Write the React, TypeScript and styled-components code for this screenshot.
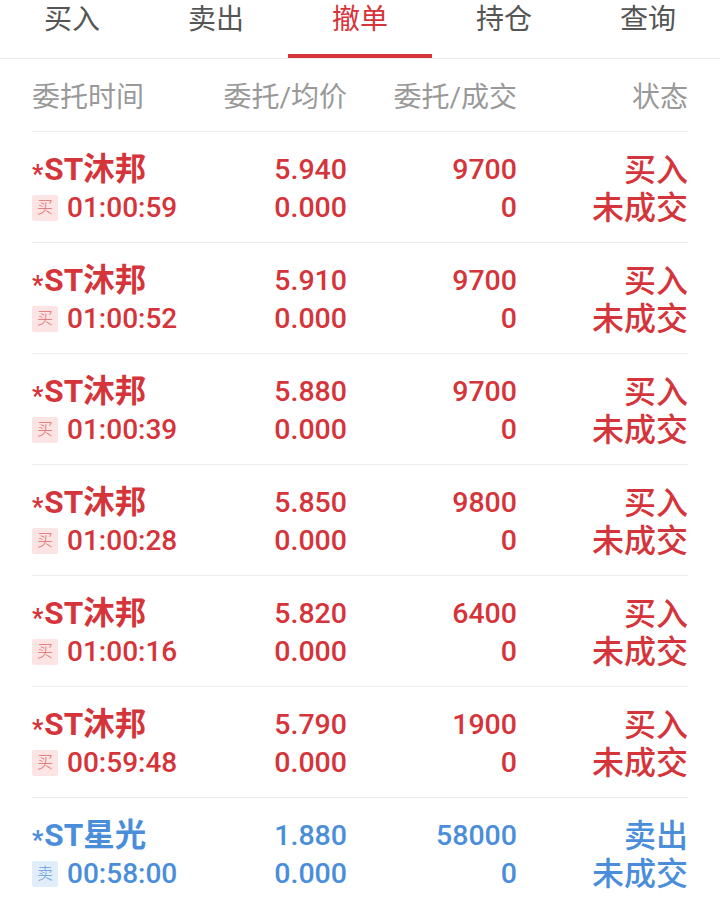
import styled, { createGlobalStyle } from 'styled-components';

const RED = '#d5343a';
const BLUE = '#4a8edb';

type Side = 'buy' | 'sell';

interface Order {
  name: string;
  time: string;
  price: string;
  avg: string;
  qty: string;
  done: string;
  side: Side;
}

const tabs = ['买入', '卖出', '撤单', '持仓', '查询'];

const orders: Order[] = [
  { name: 'ST沐邦', time: '01:00:59', price: '5.940', avg: '0.000', qty: '9700', done: '0', side: 'buy' },
  { name: 'ST沐邦', time: '01:00:52', price: '5.910', avg: '0.000', qty: '9700', done: '0', side: 'buy' },
  { name: 'ST沐邦', time: '01:00:39', price: '5.880', avg: '0.000', qty: '9700', done: '0', side: 'buy' },
  { name: 'ST沐邦', time: '01:00:28', price: '5.850', avg: '0.000', qty: '9800', done: '0', side: 'buy' },
  { name: 'ST沐邦', time: '01:00:16', price: '5.820', avg: '0.000', qty: '6400', done: '0', side: 'buy' },
  { name: 'ST沐邦', time: '00:59:48', price: '5.790', avg: '0.000', qty: '1900', done: '0', side: 'buy' },
  { name: 'ST星光', time: '00:58:00', price: '1.880', avg: '0.000', qty: '58000', done: '0', side: 'sell' },
];

function App() {
  return (
    <Page>
      <GlobalStyle />
      <TabBar>
        {tabs.map((t, i) => (
          <Tab key={t} $active={i === 2}>
            {t}
          </Tab>
        ))}
      </TabBar>
      <List>
        <HeaderRow>
          <HeadCell>委托时间</HeadCell>
          <HeadCell $right>委托/均价</HeadCell>
          <HeadCell $right>委托/成交</HeadCell>
          <HeadCell $right>状态</HeadCell>
        </HeaderRow>
        {orders.map((o, i) => (
          <OrderRow key={i} $side={o.side}>
            <Cell>
              <Name>
                <Star>*</Star>
                {o.name}
              </Name>
              <TimeLine>
                <SideTag $side={o.side}>{o.side === 'buy' ? '买' : '卖'}</SideTag>
                {o.time}
              </TimeLine>
            </Cell>
            <Cell $right>
              <Num>{o.price}</Num>
              <Num>{o.avg}</Num>
            </Cell>
            <Cell $right>
              <Num>{o.qty}</Num>
              <Num>{o.done}</Num>
            </Cell>
            <Cell $right>
              <Status>{o.side === 'buy' ? '买入' : '卖出'}</Status>
              <Status>未成交</Status>
            </Cell>
          </OrderRow>
        ))}
      </List>
    </Page>
  );
}

export default App;

const GlobalStyle = createGlobalStyle`
  body {
    margin: 0;
    background: #fff;
    font-family: Roboto, "Noto Sans CJK SC", sans-serif;
  }
`;

const Page = styled.div`
  width: 720px;
  min-height: 917px;
  background: #fff;
`;

const TabBar = styled.div`
  display: flex;
  height: 58px;
  border-bottom: 1px solid #ececec;
`;

const Tab = styled.div<{ $active?: boolean }>`
  flex: 1;
  box-sizing: border-box;
  padding-top: 1px;
  line-height: 38px;
  text-align: center;
  font-size: 28px;
  color: ${({ $active }) => ($active ? RED : '#555')};
  border-bottom: 4px solid ${({ $active }) => ($active ? RED : 'transparent')};
`;

const List = styled.div`
  padding: 0 32px;
`;

const Grid = styled.div`
  display: grid;
  grid-template-columns: 145px 170px 170px 171px;
`;

const HeaderRow = styled(Grid)`
  height: 72px;
  align-items: center;
  border-bottom: 1px solid #ececec;
`;

const HeadCell = styled.div<{ $right?: boolean }>`
  font-size: 28px;
  color: #999;
  text-align: ${({ $right }) => ($right ? 'right' : 'left')};
  white-space: nowrap;
`;

const OrderRow = styled(Grid)<{ $side: Side }>`
  height: 111px;
  box-sizing: border-box;
  padding-top: 19px;
  color: ${({ $side }) => ($side === 'buy' ? RED : BLUE)};
  border-bottom: 1px solid #ececec;

  &:last-child {
    border-bottom: none;
  }
`;

const Cell = styled.div<{ $right?: boolean }>`
  display: flex;
  flex-direction: column;
  align-items: ${({ $right }) => ($right ? 'flex-end' : 'flex-start')};
  white-space: nowrap;
`;

const Name = styled.div`
  height: 38px;
  line-height: 38px;
  font-size: 31.5px;
  font-weight: 700;
`;

const Star = styled.span`
  margin-right: 1px;
  font-size: 25px;
  vertical-align: -3px;
`;

const TimeLine = styled.div`
  display: flex;
  align-items: center;
  gap: 9px;
  line-height: 38px;
  font-size: 28px;
  font-weight: 500;
`;

const SideTag = styled.span<{ $side: Side }>`
  display: inline-flex;
  align-items: center;
  justify-content: center;
  width: 26px;
  height: 26px;
  border-radius: 2px;
  font-size: 16px;
  font-weight: 300;
  background: ${({ $side }) => ($side === 'buy' ? '#fce4e4' : '#e2edfa')};
  color: ${({ $side }) => ($side === 'buy' ? '#e26b6b' : '#6a9fe0')};
`;

const Num = styled.div`
  line-height: 38px;
  font-size: 28.5px;
  font-weight: 500;
`;

const Status = styled.div`
  line-height: 38px;
  font-size: 32px;
  font-weight: 500;
`;
